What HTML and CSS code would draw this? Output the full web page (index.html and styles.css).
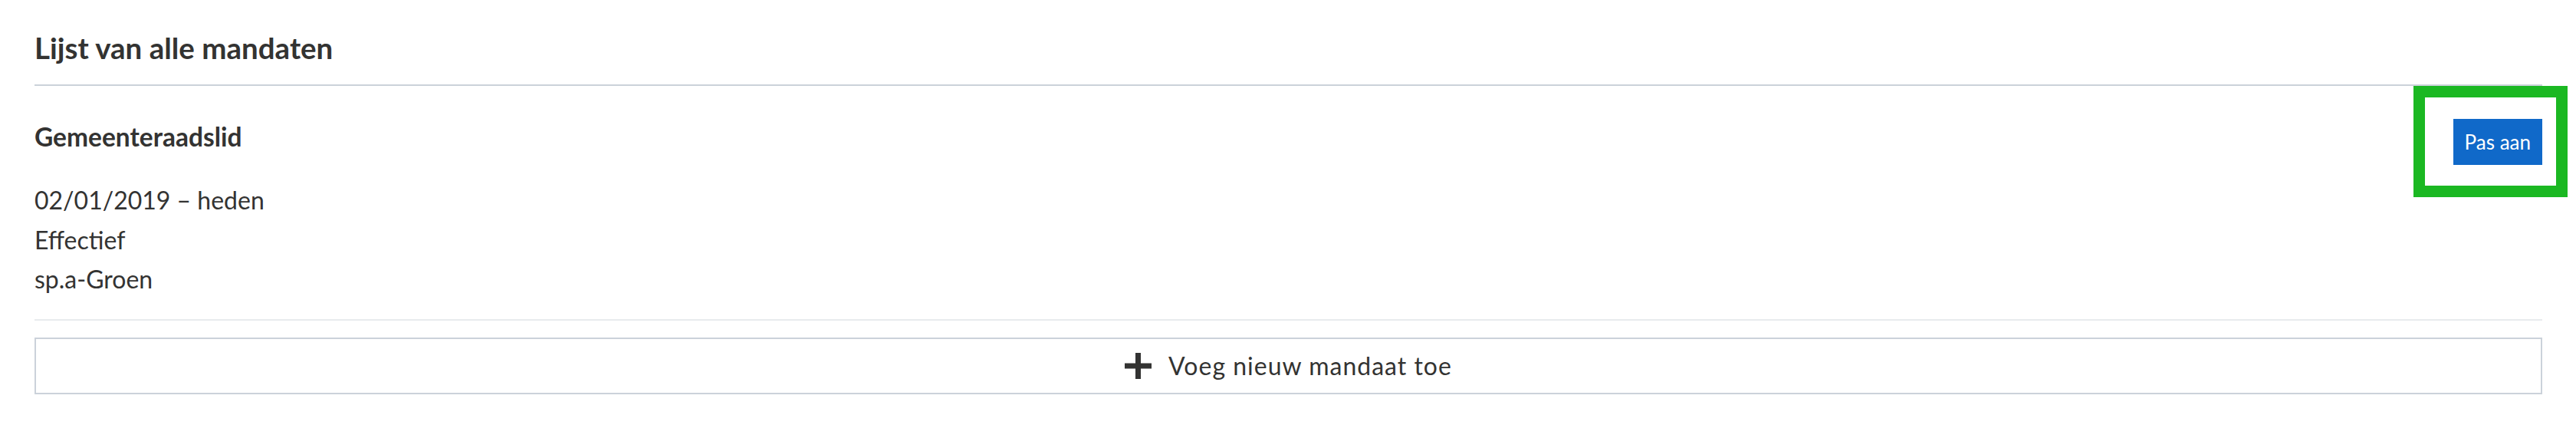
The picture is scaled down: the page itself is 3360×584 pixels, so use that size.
FILE: index.html
```html
<!DOCTYPE html>
<html lang="nl">
<head>
<meta charset="utf-8">
<title>Lijst van alle mandaten</title>
<link rel="stylesheet" href="styles.css">
</head>
<body>
<main class="panel">
  <h2 class="panel-title">Lijst van alle mandaten</h2>
  <section class="mandate">
    <div class="mandate-head">
      <h3 class="mandate-name">Gemeenteraadslid</h3>
      <div class="highlight-wrap">
        <button class="btn-primary" type="button">Pas aan</button>
        <span class="highlight"></span>
      </div>
    </div>
    <ul class="mandate-info">
      <li>02/01/2019 – heden</li>
      <li>Effectief</li>
      <li>sp.a-Groen</li>
    </ul>
  </section>
  <button class="btn-add" type="button">
    <svg class="plus" width="35" height="34" viewBox="0 0 35 34" aria-hidden="true">
      <rect x="14" y="0" width="7" height="34" fill="#333332"/>
      <rect x="0" y="13.5" width="35" height="7" fill="#333332"/>
    </svg>
    <span class="btn-add-label">Voeg nieuw mandaat toe</span>
  </button>
</main>
</body>
</html>
```
FILE: styles.css
```css
* { box-sizing: border-box; }
html, body { margin: 0; padding: 0; background: #ffffff; }
body {
  font-family: Lato, "Open Sans", sans-serif;
  color: #333332;
}
.panel {
  padding: 40px 44px 0 45px;
}
.panel-title {
  margin: 0;
  font-size: 38.5px;
  font-weight: 700;
  line-height: 45px;
  padding-bottom: 25px;
  border-bottom: 2px solid #cbd2da;
}
.mandate {
  padding-top: 43px;
  padding-bottom: 26px;
  border-bottom: 2px solid #e8ebee;
}
.mandate-head {
  display: flex;
  justify-content: space-between;
  align-items: flex-start;
}
.mandate-name {
  margin: 3px 0 0 0;
  font-size: 33.5px;
  font-weight: 700;
  line-height: 41px;
}
.highlight-wrap {
  position: relative;
}
.btn-primary {
  display: block;
  height: 60px;
  padding: 0 15px;
  border: 0;
  background: #1069c9;
  color: #ffffff;
  font-family: Lato, "Open Sans", sans-serif;
  font-size: 26px;
  line-height: 60px;
}
.highlight {
  position: absolute;
  top: -43px;
  left: -52px;
  right: -33px;
  bottom: -42px;
  border: 15px solid #1bb822;
  pointer-events: none;
}
.mandate-info {
  list-style: none;
  margin: 20px 0 0 0;
  padding: 0;
  font-size: 32px;
  line-height: 51.5px;
}
.btn-add {
  display: flex;
  align-items: center;
  justify-content: center;
  gap: 22px;
  width: 100%;
  height: 74px;
  margin-top: 22px;
  border: 2px solid #cbd2da;
  background: #ffffff;
  color: #333332;
  font-family: Lato, "Open Sans", sans-serif;
  font-size: 32px;
  line-height: 40px;
  padding: 0;
}
.btn-add-label { letter-spacing: 1px; }
.plus { display: block; }
```
